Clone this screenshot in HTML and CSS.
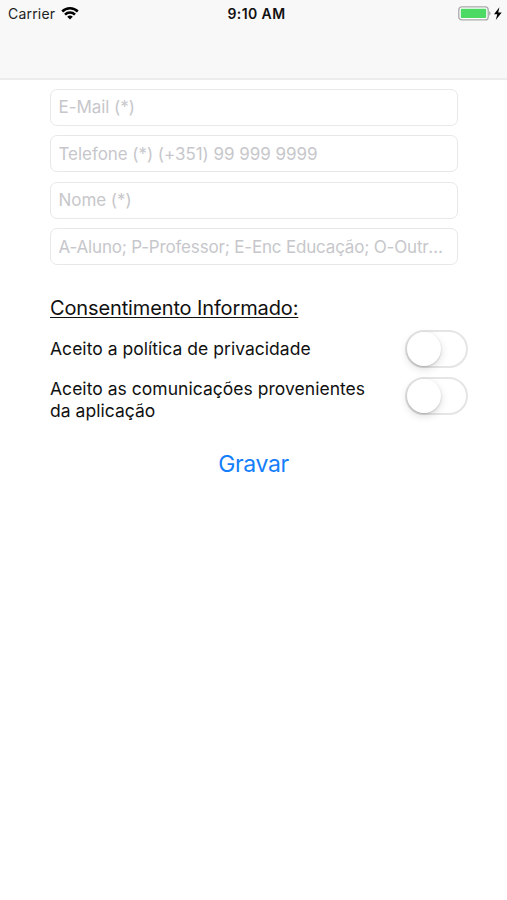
FILE: index.html
```html
<!DOCTYPE html>
<html lang="pt">
<head>
    <meta charset="UTF-8">
    <meta name="viewport" content="width=device-width, initial-scale=1.0">
    <title>Registo</title>
    <link rel="stylesheet" href="styles.css">
</head>
<body>
    <header class="navbar">
        <div class="status-bar">
            <div class="status-left">
                <span class="carrier">Carrier</span>
                <svg class="wifi" width="18" height="13" viewBox="0 0 18 13" fill="none" stroke="#000" stroke-width="2.5">
                    <path d="M1.2 4.5a11 11 0 0 1 15.6 0"/>
                    <path d="M4 7.6a7 7 0 0 1 10 0"/>
                    <path d="M9 12.6L6.2 9.8a4 4 0 0 1 5.6 0z" fill="#000" stroke="none"/>
                </svg>
            </div>
            <span class="time">9:10 AM</span>
            <div class="status-right">
                <svg width="45" height="16" viewBox="0 0 45 16">
                    <rect x="0.8" y="0.9" width="29.4" height="13" rx="3" fill="#fff" stroke="#a9a9ab" stroke-width="1.3"/>
                    <rect x="2.8" y="2.8" width="25.4" height="9.2" rx="1" fill="#4cd964"/>
                    <path d="M31.2 5.1a2.6 2.6 0 0 1 0 4.6z" fill="#a9a9ab"/>
                    <path d="M41.4 1.2L36 8.2h3.3L37.8 14l5.9-7.4h-3.5z" fill="#000"/>
                </svg>
            </div>
        </div>
    </header>

    <form class="form">
        <input type="email" name="email" class="input-text" placeholder="E-Mail (*)">
        <input type="tel" name="telefone" class="input-text" placeholder="Telefone (*) (+351) 99 999 9999">
        <input type="text" name="nome" class="input-text" placeholder="Nome (*)">
        <input type="text" name="tipo" class="input-text input-tipo" placeholder="A-Aluno; P-Professor; E-Enc Educação; O-Outros">

        <h2 class="title">Consentimento Informado:</h2>

        <label class="consent">
            <span class="consent-label">Aceito a política de privacidade</span>
            <input type="checkbox" name="privacidade" class="switch">
        </label>
        <label class="consent consent-long">
            <span class="consent-label">Aceito as comunicações provenientes da aplicação</span>
            <input type="checkbox" name="comunicacoes" class="switch">
        </label>

        <button type="button" class="form-button">Gravar</button>
    </form>
</body>
</html>
```
FILE: styles.css
```css
* {
    box-sizing: border-box;
}

body {
    margin: 0;
    min-height: 100vh;
    background-color: #fff;
    color: #111;
    font-family: Inter, "Liberation Sans", sans-serif;
}

.navbar {
    height: 80px;
    background-color: #f8f8f8;
    border-bottom: 2px solid #ececec;
}

.status-bar {
    display: grid;
    grid-template-columns: 1fr auto 1fr;
    align-items: center;
    height: 27px;
    padding: 0 4px 0 8px;
}

.status-left {
    display: flex;
    align-items: center;
    gap: 6px;
}

.carrier {
    font-size: 14px;
    letter-spacing: 0.2px;
    color: #222;
}

.time {
    font-size: 14px;
    font-weight: 600;
    letter-spacing: 0.4px;
    margin-left: 2px;
}

.status-right {
    display: flex;
    justify-content: flex-end;
}

.form {
    display: flex;
    flex-direction: column;
    padding: 8.5px 39px 0 50px;
}

.input-text {
    width: 408px;
    height: 37px;
    margin: 0 0 9.5px;
    padding: 0 14px 0 7.5px;
    border: 1px solid #e8e8e8;
    border-radius: 7px;
    background-color: #fff;
    font-family: inherit;
    font-size: 17px;
    letter-spacing: -0.05px;
    text-overflow: ellipsis;
    outline: none;
}

.input-tipo {
    letter-spacing: -0.18px;
}

.input-text::placeholder {
    color: #c7c7cb;
    opacity: 1;
}

.title {
    margin: 21px 0 10px;
    font-size: 20px;
    font-weight: 400;
    line-height: 24px;
    letter-spacing: -0.13px;
    text-decoration: underline;
    text-decoration-thickness: 1px;
    text-underline-offset: 2px;
}

.consent {
    display: flex;
    align-items: center;
    justify-content: space-between;
    height: 38px;
}

.consent-label {
    width: 330px;
    font-size: 17.5px;
    line-height: 22px;
    letter-spacing: 0.03px;
}

.consent-long {
    align-items: flex-start;
    margin-top: 9px;
}

.consent-long .consent-label {
    padding-top: 1px;
}

/* iOS style switch */
.switch {
    appearance: none;
    display: flex;
    width: 63px;
    height: 38px;
    margin: 0;
    border: 2px solid #e5e5e5;
    border-radius: 19px;
    background-color: #fff;
}

.switch::before {
    content: "";
    width: 34px;
    height: 34px;
    border-radius: 50%;
    background-color: #fff;
    box-shadow: 0 3px 8px rgba(0, 0, 0, 0.14), 0 1px 2px rgba(0, 0, 0, 0.16);
}

.form-button {
    margin: 34px 0 0;
    padding: 0 11px 0 0;
    border: none;
    background: none;
    color: #147efb;
    font-family: inherit;
    font-size: 23px;
    letter-spacing: -0.4px;
    line-height: 30px;
}
```
